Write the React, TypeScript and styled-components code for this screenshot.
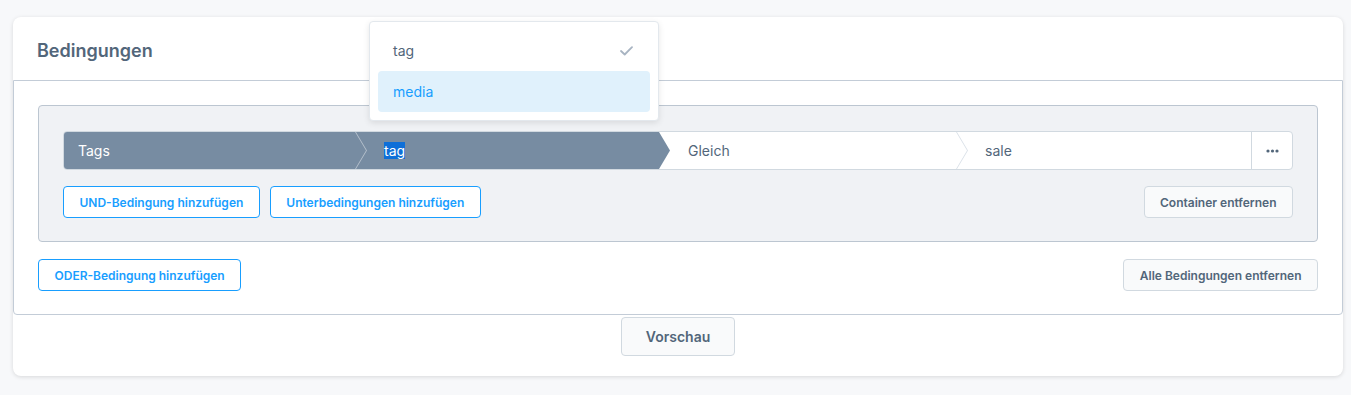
import styled, { createGlobalStyle } from 'styled-components'

const GlobalStyle = createGlobalStyle`
  body {
    margin: 0;
    background: #f7f8fa;
    font-family: Inter, "Noto Sans", sans-serif;
  }
`

export default function App() {
  return (
    <Page>
      <GlobalStyle />
      <Card>
        <CardHeader>
          <Title>Bedingungen</Title>
        </CardHeader>
        <CardBody>
          <Container>
            <ConditionRow>
              <Segment $dark $first $width={291}>Tags</Segment>
              <Segment $dark $tip $width={304}>
                <Chevron $light />
                <Selected>tag</Selected>
              </Segment>
              <Segment $width={297}>Gleich</Segment>
              <Segment>
                <Chevron />
                sale
              </Segment>
              <MoreButton>
                <svg width="13" height="4" viewBox="0 0 13 4">
                  <circle cx="2" cy="2" r="1.6" fill="#52667a" />
                  <circle cx="6.5" cy="2" r="1.6" fill="#52667a" />
                  <circle cx="11" cy="2" r="1.6" fill="#52667a" />
                </svg>
              </MoreButton>
            </ConditionRow>
            <ButtonBar>
              <Group>
                <SmallButton $primary>UND-Bedingung hinzufügen</SmallButton>
                <SmallButton $primary>Unterbedingungen hinzufügen</SmallButton>
              </Group>
              <SmallButton>Container entfernen</SmallButton>
            </ButtonBar>
          </Container>
          <BodyFooter>
            <SmallButton $primary>ODER-Bedingung hinzufügen</SmallButton>
            <SmallButton>Alle Bedingungen entfernen</SmallButton>
          </BodyFooter>
        </CardBody>
        <CardFooter>
          <Button>Vorschau</Button>
        </CardFooter>
      </Card>

      <Dropdown>
        <Option>
          tag
          <svg width="13" height="10" viewBox="0 0 13 10">
            <polyline points="1,5 4.7,8.5 12,1.2" fill="none" stroke="#a8b4c2" strokeWidth="1.8" strokeLinecap="round" strokeLinejoin="round" />
          </svg>
        </Option>
        <Option $active>media</Option>
      </Dropdown>
    </Page>
  )
}

const Page = styled.div`
  position: relative;
  padding: 17px 8px 19px 13px;
`

const Card = styled.div`
  background: #fff;
  border-radius: 8px;
  box-shadow: 0 1px 4px rgba(0, 0, 0, 0.13);
`

const CardHeader = styled.div`
  height: 63px;
  display: flex;
  align-items: center;
  padding: 3px 24px 0;
  box-sizing: border-box;
`

const Title = styled.h2`
  margin: 0;
  font-size: 18px;
  font-weight: 600;
  color: #52667a;
`

const CardBody = styled.div`
  border: 1px solid #c3ccd7;
  border-radius: 0 0 4px 4px;
  padding: 24px 24px 23px;
`

const Container = styled.div`
  background: #f0f2f5;
  border: 1px solid #bcc6d1;
  border-radius: 4px;
  padding: 25px 24px 23px;
`

const ConditionRow = styled.div`
  display: flex;
  height: 39px;
  box-sizing: border-box;
  border: 1px solid #d1d9e0;
  border-radius: 4px;
  background: #fff;
`

const Segment = styled.div<{ $dark?: boolean; $first?: boolean; $tip?: boolean; $width?: number }>`
  position: relative;
  flex: ${(p) => (p.$width ? `0 0 ${p.$width}px` : '1')};
  box-sizing: border-box;
  display: flex;
  align-items: center;
  padding-left: ${(p) => (p.$first ? '14px' : '29px')};
  font-size: 14px;
  color: ${(p) => (p.$dark ? '#fff' : '#52667a')};
  background: ${(p) => (p.$dark ? '#778ca2' : 'transparent')};
  border-radius: ${(p) => (p.$first ? '3px 0 0 3px' : '0')};

  ${(p) =>
    p.$tip &&
    `
    &::after {
      content: '';
      position: absolute;
      top: 0;
      right: -11px;
      width: 11px;
      height: 100%;
      background: #778ca2;
      clip-path: polygon(0 0, 100% 50%, 0 100%);
      z-index: 1;
    }
  `}
`

const Chevron = styled.span<{ $light?: boolean }>`
  position: absolute;
  left: 0;
  top: 0;
  width: 12px;
  height: 100%;
  background: ${(p) => (p.$light ? 'rgba(255, 255, 255, 0.45)' : '#dbe2e9')};
  clip-path: polygon(0 0, 1px 0, 100% 50%, 1px 100%, 0 100%, calc(100% - 1px) 50%);
`

const Selected = styled.span`
  background: #0e6fd8;
  color: #fff;
`

const MoreButton = styled.div`
  width: 40px;
  display: flex;
  align-items: center;
  justify-content: center;
  border-left: 1px solid #d1d9e0;
`

const ButtonBar = styled.div`
  display: flex;
  justify-content: space-between;
  margin-top: 16px;
`

const Group = styled.div`
  display: flex;
  gap: 10px;
`

const SmallButton = styled.button<{ $primary?: boolean }>`
  height: 32px;
  padding: 0 15.5px;
  font-family: inherit;
  font-size: 12px;
  font-weight: 600;
  border-radius: 4px;
  border: 1px solid ${(p) => (p.$primary ? '#189eff' : '#d1d9e0')};
  background: ${(p) => (p.$primary ? '#fff' : '#f9fafb')};
  color: ${(p) => (p.$primary ? '#189eff' : '#52667a')};
`

const BodyFooter = styled.div`
  display: flex;
  justify-content: space-between;
  margin-top: 17px;
`

const CardFooter = styled.div`
  display: flex;
  justify-content: center;
  padding: 2px 0 20px;
`

const Button = styled.button`
  height: 39px;
  padding: 0 24px;
  font-family: inherit;
  font-size: 14px;
  font-weight: 600;
  color: #52667a;
  background: #f9fafb;
  border: 1px solid #d1d9e0;
  border-radius: 4px;
`

const Dropdown = styled.div`
  position: absolute;
  left: 369px;
  top: 21px;
  width: 290px;
  box-sizing: border-box;
  padding: 8px;
  background: #fff;
  border: 1px solid #e3e8ed;
  border-radius: 4px;
  box-shadow: 0 2px 6px rgba(0, 0, 0, 0.1);
  z-index: 5;
`

const Option = styled.div<{ $active?: boolean }>`
  height: 41px;
  display: flex;
  align-items: center;
  justify-content: space-between;
  padding: 0 17px 0 15px;
  border-radius: 4px;
  font-size: 14px;
  color: ${(p) => (p.$active ? '#189eff' : '#52667a')};
  background: ${(p) => (p.$active ? '#e0f1fc' : 'transparent')};
`
